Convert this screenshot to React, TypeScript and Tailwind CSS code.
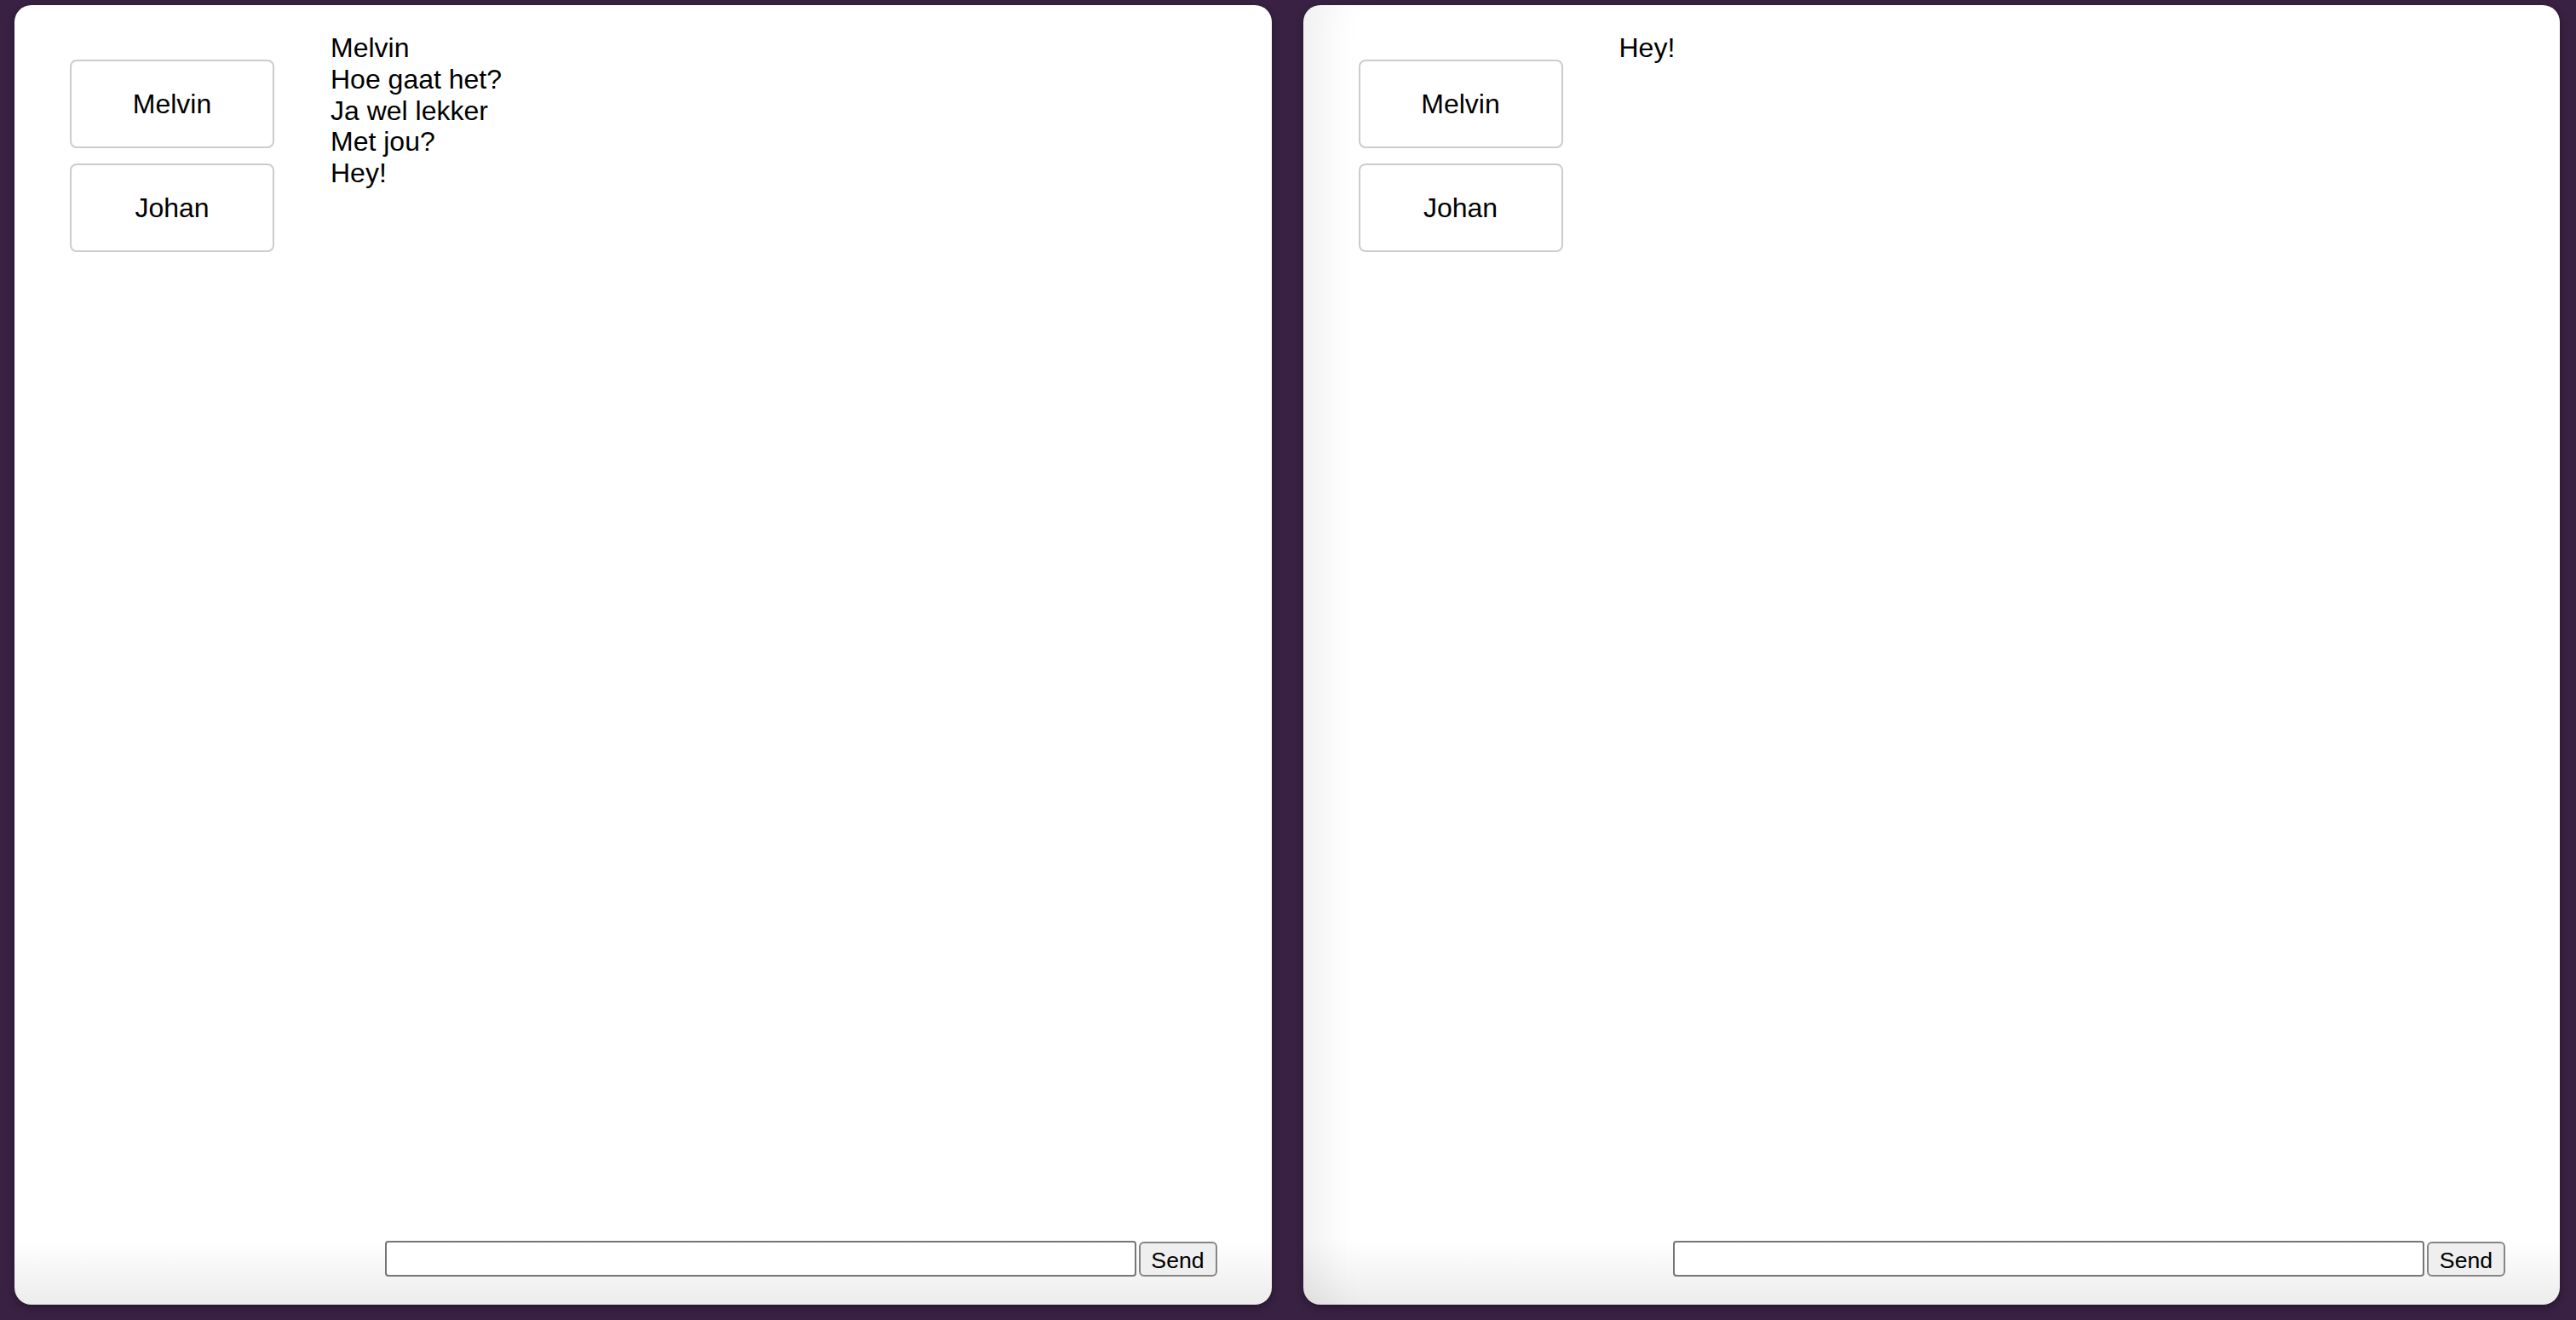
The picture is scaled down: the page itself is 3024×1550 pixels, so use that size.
import React, { useState } from 'react';

const users = ['Melvin', 'Johan'];

type PanelProps = {
  messages: string[];
  shaded?: boolean;
};

const ChatPanel: React.FC<PanelProps> = ({ messages, shaded }) => {
  const [text, setText] = useState('');

  return (
    <div
      className={`flex-1 flex flex-col bg-white rounded-[20px] shadow-[0_3px_8px_rgba(0,0,0,0.35)] ${
        shaded
          ? 'bg-[linear-gradient(to_bottom,#ffffff_0%,#ffffff_95%,#ececec_100%)] shadow-[inset_60px_0_50px_-40px_rgba(0,0,0,0.07),0_3px_8px_rgba(0,0,0,0.35)]'
          : 'bg-[linear-gradient(to_bottom,#ffffff_0%,#ffffff_95%,#ececec_100%)]'
      }`}
    >
      <div className="flex-1 flex">
        <div className="flex flex-col gap-[18px] ml-[65px] mt-[64px]">
          {users.map(u => (
            <button
              key={u}
              className="w-[240px] h-[104px] bg-white border-2 border-[#cccccc] rounded-[8px] text-[32px] text-black"
            >
              {u}
            </button>
          ))}
        </div>
        <div className="ml-[66px] mt-[32px] flex flex-col text-[32px] leading-[1.15] text-black">
          {messages.map((m, i) => (
            <div key={i}>{m}</div>
          ))}
        </div>
      </div>
      <div className="flex justify-end items-center mr-[64px] mb-[33px]">
        <input
          value={text}
          onChange={e => setText(e.target.value)}
          className="w-[882px] h-[42px] bg-white border-2 border-[#767676] rounded-[4px] px-2 text-[26px] outline-none"
        />
        <button className="ml-[3px] w-[92px] h-[41px] bg-[#efefef] border-2 border-[#858585] rounded-[6px] text-[26.67px] text-black">
          Send
        </button>
      </div>
    </div>
  );
};

export default function App() {
  return (
    <div
      className="h-screen w-full flex gap-[37px] pt-[6px] pb-[18px] pl-[17px] pr-[19px] bg-[#382142]"
      style={{ fontFamily: '"Liberation Sans", Arial, sans-serif' }}
    >
      <ChatPanel messages={['Melvin', 'Hoe gaat het?', 'Ja wel lekker', 'Met jou?', 'Hey!']} />
      <ChatPanel messages={['Hey!']} shaded />
    </div>
  );
}
